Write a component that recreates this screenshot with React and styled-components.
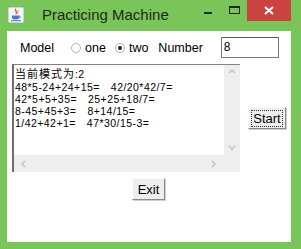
import React from 'react';
import styled, { createGlobalStyle } from 'styled-components';

//Styled Components
const GlobalStyle = createGlobalStyle`
    html, body {
        margin: 0;
        padding: 0;
        background: #7ac55a;
    }
`;
const Frame = styled.div`
    width: 301px;
    height: 249px;
    background: #7ac55a;
    display: flex;
    flex-direction: column;
    font-family: "Liberation Sans", Arial, sans-serif;
`;
const TitleBar = styled.div`
    height: 31px;
    display: flex;
    align-items: flex-start;
`;
const AppIcon = styled.div`
    margin: 7px 0 0 8px;
    width: 16px;
    height: 16px;
`;
const Title = styled.div`
    margin: 6px 0 0 18px;
    font-size: 15px;
    color: #1d2b1a;
    flex: 1;
`;
const WinButton = styled.div`
    width: ${p => p.w}px;
    height: 21px;
    display: flex;
    align-items: center;
    justify-content: center;
    background: ${p => p.red ? '#c94340' : 'transparent'};
`;
const Body = styled.div`
    margin: 0 10px 0 7px;
    height: 211px;
    background: #fff;
    display: flex;
    flex-direction: column;
`;
const TopRow = styled.div`
    display: flex;
    align-items: center;
    height: 21px;
    margin-top: 6px;
    padding-left: 13px;
    font-size: 12.5px;
    color: #000;
`;
const Label = styled.span`
    margin-left: ${p => p.ml || 0}px;
`;
const Radio = styled.span`
    width: 8px;
    height: 8px;
    border-radius: 50%;
    border: 1px solid #b0b0b0;
    background: #fff;
    margin-left: ${p => p.ml}px;
    margin-right: 4px;
    display: inline-flex;
    align-items: center;
    justify-content: center;
    &::after {
        content: '';
        width: 4px;
        height: 4px;
        border-radius: 50%;
        background: ${p => p.checked ? '#222' : 'transparent'};
    }
`;
const NumberInput = styled.div`
    margin-left: 18px;
    width: 54px;
    height: 19px;
    border: 1px solid #7a7a7a;
    border-top-color: #5a5a5a;
    font-size: 12px;
    line-height: 18px;
    padding-left: 2px;
`;
const MiddleRow = styled.div`
    display: flex;
    align-items: center;
    margin-top: 6px;
    padding-left: 5px;
`;
const TextArea = styled.div`
    width: 228px;
    height: 108px;
    display: grid;
    grid-template-columns: 1fr 16px;
    grid-template-rows: 1fr 17px;
    border-top: 1px solid #828282;
    border-left: 2px solid #6e6e6e;
    box-sizing: border-box;
    background: #eeeeee;
`;
const Output = styled.div`
    background: #fff;
    padding-left: 1px;
    font-size: 10.5px;
    letter-spacing: 0.45px;
    color: #000;
    overflow: hidden;
    white-space: nowrap;
`;
const Line = styled.div`
    display: flex;
    align-items: center;
    gap: 11px;
    height: ${p => p.h || 12.1}px;
    line-height: ${p => p.h || 12.1}px;
`;
const Han = styled.span`
    font-family: "Noto Sans CJK SC", sans-serif;
    font-size: 11px;
    letter-spacing: 1px;
`;
const ScrollBar = styled.div`
    display: flex;
    flex-direction: ${p => p.vertical ? 'column' : 'row'};
    justify-content: space-between;
    align-items: center;
    padding: ${p => p.vertical ? '3px 0' : '0 6px 0 6px'};
    background: #eeeeee;
`;
const Corner = styled.div`
    background: #eeeeee;
`;
const Button = styled.div`
    width: ${p => p.w}px;
    height: 22px;
    box-sizing: border-box;
    background: #eeeeee;
    border: 1px solid;
    border-color: #fff #8a8a8a #8a8a8a #fff;
    box-shadow: 1px 1px 0 #cfcfcf;
    font-size: 13px;
    display: flex;
    align-items: center;
    justify-content: center;
    margin-left: ${p => p.ml || 0}px;
`;
const Focus = styled.span`
    border: 1px dotted #333;
    padding: 0 1px;
    line-height: 15px;
`;
const BottomRow = styled.div`
    display: flex;
    justify-content: center;
    margin-top: 6px;
    padding-right: 1px;
`;

const Chevron = ({ dir }) => {
    const paths = {
        up: 'M1 5 L4 2 L7 5',
        down: 'M1 2 L4 5 L7 2',
        left: 'M5 1 L2 4 L5 7',
        right: 'M2 1 L5 4 L2 7',
    };
    return (
        <svg width="8" height="8" viewBox="0 0 8 8">
            <path d={paths[dir]} fill="none" stroke="#c4c4c4" strokeWidth="1.6" />
        </svg>
    );
};

const JavaIcon = () => (
    <svg width="16" height="16" viewBox="0 0 16 16">
        <rect x="0.5" y="0.5" width="15" height="15" rx="1" fill="#f4f6fb" stroke="#c9d3e6" />
        <path d="M8 2 C6 4 10 4 8 7" fill="none" stroke="#e0412b" strokeWidth="1.2" />
        <path d="M10 3 C9 4 11 5 9.5 6.5" fill="none" stroke="#f08a24" strokeWidth="1" />
        <path d="M4 8.5 H11 V10.5 C11 12 9.5 12.5 7.5 12.5 C5.5 12.5 4 12 4 10.5 Z" fill="#4a78c2" />
        <path d="M11 9 C13 9 13 11 11 11" fill="none" stroke="#4a78c2" strokeWidth="1" />
        <rect x="3" y="13.2" width="10" height="1" fill="#4a78c2" />
    </svg>
);

const problems = [
    ['48*5-24+24+15=', '42/20*42/7='],
    ['42*5+5+35=', '25+25+18/7='],
    ['8-45+45+3=', '8+14/15='],
    ['1/42+42+1=', '47*30/15-3='],
];

function App() {
    return (
        <Frame>
            <GlobalStyle />
            <TitleBar>
                <AppIcon><JavaIcon /></AppIcon>
                <Title>Practicing Machine</Title>
                <WinButton w={27}>
                    <svg width="9" height="9" viewBox="0 0 9 9"><rect x="0" y="6" width="8" height="2" fill="#1d2b1a" /></svg>
                </WinButton>
                <WinButton w={25}>
                    <svg width="11" height="9" viewBox="0 0 11 9"><rect x="0.5" y="0.5" width="10" height="7" fill="none" stroke="#1d2b1a" /><rect x="0" y="0" width="11" height="2" fill="#1d2b1a" /></svg>
                </WinButton>
                <WinButton w={44} red>
                    <svg width="10" height="9" viewBox="0 0 10 9"><path d="M1 1 L9 8 M9 1 L1 8" stroke="#fff" strokeWidth="2" /></svg>
                </WinButton>
                <div style={{ width: 10 }} />
            </TitleBar>
            <Body>
                <TopRow>
                    <Label>Model</Label>
                    <Radio ml={17} />
                    <Label>one</Label>
                    <Radio ml={9} checked />
                    <Label>two</Label>
                    <Label ml={10}>Number</Label>
                    <NumberInput>8</NumberInput>
                </TopRow>
                <MiddleRow>
                    <TextArea>
                        <Output>
                            <Line h={16}><span><Han>当前模式为</Han>:2</span></Line>
                            {problems.map(p => (
                                <Line key={p[0]}>
                                    <span>{p[0]}</span>
                                    <span>{p[1]}</span>
                                </Line>
                            ))}
                        </Output>
                        <ScrollBar vertical>
                            <Chevron dir="up" />
                            <Chevron dir="down" />
                        </ScrollBar>
                        <ScrollBar>
                            <Chevron dir="left" />
                            <Chevron dir="right" />
                        </ScrollBar>
                        <Corner />
                    </TextArea>
                    <Button w={38} ml={8}><Focus>Start</Focus></Button>
                </MiddleRow>
                <BottomRow>
                    <Button w={33}>Exit</Button>
                </BottomRow>
            </Body>
        </Frame>
    );
}

export default App;
